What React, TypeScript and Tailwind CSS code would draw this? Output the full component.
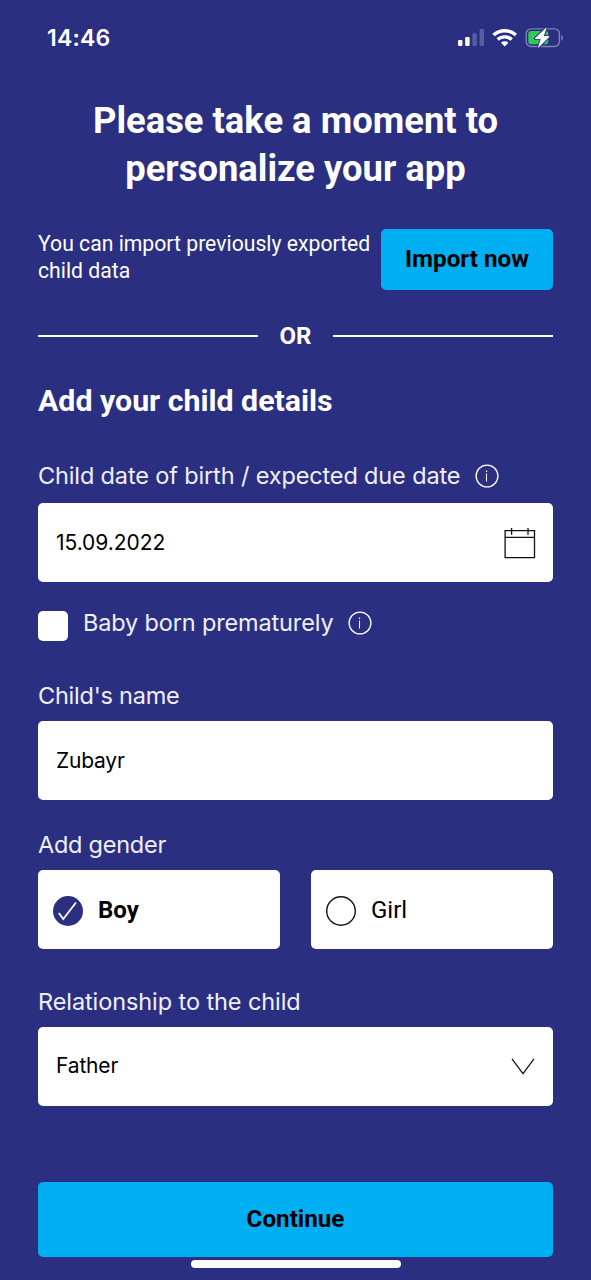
import { useState } from "react";
import type { ReactNode } from "react";

function StatusIcons() {
  return (
    <svg width="110" height="24" viewBox="0 0 110 24" fill="none" aria-hidden="true">
      <g fill="#fff">
        <rect x="3" y="14" width="4.400" height="6" rx="1.200" />
        <rect x="10.200" y="11" width="4.400" height="9" rx="1.200" />
        <rect x="17.400" y="7.200" width="4.400" height="12.800" rx="1.200" opacity="0.220" />
        <rect x="24.600" y="3" width="4.400" height="17" rx="1.200" opacity="0.220" />
      </g>
      <g stroke="#fff" strokeWidth="3.400">
        <path d="M38.500 9.100a16.400 16.400 0 0 1 22.400 0" />
        <path d="M42.700 13.600a10.300 10.300 0 0 1 14 0" />
      </g>
      <path d="M49.700 20.500l-3.700-3.700a5.400 5.400 0 0 1 7.400 0z" fill="#fff" />
      <rect x="71.200" y="2.900" width="33.200" height="17.600" rx="5" stroke="#8080b4" strokeWidth="1.400" />
      <path d="M106.400 8.900c2.200 1 2.200 4.800 0 5.800z" fill="#8080b4" />
      <rect x="73.300" y="5.100" width="20" height="13.200" rx="2.800" fill="#34c759" />
      <path
        d="M91.200 2L80 12.700h6.200l-2.800 8.600L94.200 10.600h-6z"
        fill="#fff"
        stroke="#2b2f82"
        strokeWidth="2.600"
        strokeLinejoin="round"
        paintOrder="stroke"
      />
      <path d="M91.200 2L80 12.700h6.200l-2.800 8.600L94.200 10.600h-6z" fill="#fff" stroke="#fff" strokeWidth="0.600" strokeLinejoin="round" />
    </svg>
  );
}

function InfoIcon() {
  return (
    <svg width="24" height="24" viewBox="0 0 24 24" fill="none" stroke="#fff" aria-hidden="true">
      <circle cx="12" cy="12" r="10.900" strokeWidth="1.300" />
      <path d="M11.500 9.500v8" strokeWidth="1" />
      <path d="M11.500 6.500v1.500" strokeWidth="1.200" />
    </svg>
  );
}

function CalendarIcon() {
  return (
    <svg width="32" height="32" viewBox="0 0 32 32" fill="none" stroke="#111" strokeWidth="1.300" aria-hidden="true">
      <path d="M1.100 3.700h29.400v26.900H1.100zM1.100 10.400h29.400M7.600 1v6.700M24 1v6.700" />
    </svg>
  );
}

function Label({ children, className }: { children: ReactNode; className: string }) {
  return (
    <div
      className={`flex h-[30px] items-center whitespace-nowrap font-['Inter',sans-serif] text-[23.500px] font-normal text-[#f0f0fb] ${className}`}
    >
      {children}
    </div>
  );
}

export default function App() {
  const [gender, setGender] = useState("Boy");
  return (
    <main className="flex h-[1280px] w-[591px] flex-col overflow-hidden bg-[#2b2f82] font-['Roboto',sans-serif] text-white">
      <header className="flex h-[76px] shrink-0 items-center justify-between pl-[47px] pr-[26px]">
        <span className="font-['Inter',sans-serif] text-[23px] font-semibold tracking-[0.200px]">14:46</span>
        <StatusIcons />
      </header>

      <div className="flex flex-col px-[38px]">
        <h1 className="mt-[21px] whitespace-nowrap text-center text-[36.400px] font-bold leading-[48px]">
          Please take a moment to
          <br />
          personalize your app
        </h1>

        <section className="mt-9 flex h-[61px] justify-between">
          <p className="whitespace-nowrap pt-px text-[21.200px] leading-[27px]">
            You can import previously exported
            <br />
            child data
          </p>
          <button className="h-[61px] w-[172px] rounded-[5px] bg-[#00aef2] pb-px text-[24.200px] font-bold text-black">
            Import now
          </button>
        </section>

        <div className="mt-[31px] flex h-[30px] items-center justify-between">
          <span className="h-[1.500px] w-[220px] bg-white" />
          <span className="text-[24px] font-bold">OR</span>
          <span className="h-[1.500px] w-[220px] bg-white" />
        </div>

        <h2 className="mt-[30px] text-[30.300px] font-bold leading-[40px]">Add your child details</h2>

        <div className="mt-[40px] flex items-center justify-between pr-[54px]">
          <Label className="tracking-[-0.140px]">Child date of birth / expected due date</Label>
          <InfoIcon />
        </div>
        <div className="mt-[12px] flex h-[79px] items-center justify-between rounded-[5px] bg-white pl-[18px] pr-[17px] text-black">
          <span className="font-['Inter',sans-serif] text-[21px] tracking-[-0.050px]">15.09.2022</span>
          <CalendarIcon />
        </div>

        <div className="mt-[26px] flex h-[34px] items-start">
          <span className="mt-[3px] h-[30px] w-[30px] rounded-[5px] bg-white" />
          <div className="ml-[15px] flex w-[289px] items-center justify-between">
            <Label className="tracking-[-0.150px]">Baby born prematurely</Label>
            <InfoIcon />
          </div>
        </div>

        <div className="mt-[39px]">
          <Label className="tracking-[-0.230px]">Child's name</Label>
        </div>
        <div className="mt-[10px] flex h-[79px] items-center rounded-[5px] bg-white pl-[18px] text-black">
          <span className="font-['Inter',sans-serif] text-[21px] tracking-[-0.200px]">Zubayr</span>
        </div>

        <div className="mt-[30px]">
          <Label className="tracking-[-0.250px]">Add gender</Label>
        </div>
        <div className="mt-[10px] grid grid-cols-2 gap-[31px]">
          {["Boy", "Girl"].map((name) => (
            <button
              key={name}
              onClick={() => setGender(name)}
              className="flex h-[79px] items-center gap-[15px] rounded-[5px] bg-white pl-[15px] text-[24px] text-black"
            >
              <svg className="mt-[3px]" width="30" height="30" viewBox="0 0 30 30" fill="none" aria-hidden="true">
                {gender === name ? (
                  <>
                    <circle cx="15" cy="15" r="15" fill="#2b2f82" />
                    <path d="M5.800 17l4.500 6L23 6.500" stroke="#fff" strokeWidth="1.800" />
                  </>
                ) : (
                  <circle cx="15" cy="15" r="14.300" stroke="#111" strokeWidth="1.400" />
                )}
              </svg>
              <span className={gender === name ? "font-bold" : "font-normal"}>{name}</span>
            </button>
          ))}
        </div>

        <div className="mt-[38px]">
          <Label className="tracking-[-0.090px]">Relationship to the child</Label>
        </div>
        <div className="mt-[10px] flex h-[79px] items-center justify-between rounded-[5px] bg-white pl-[18px] pr-[18px] text-black">
          <span className="pb-px font-['Inter',sans-serif] text-[21px] tracking-[-0.150px]">Father</span>
          <svg width="24" height="17" viewBox="0 0 24 17" fill="none" aria-hidden="true">
            <path d="M1 .900l11 14.800L23 .900" stroke="#111" strokeWidth="1.200" />
          </svg>
        </div>

        <button className="mt-[76px] h-[75px] rounded-[5px] bg-[#00aef2] pb-px text-[24.200px] font-bold text-black">
          Continue
        </button>
      </div>
      <div className="mt-[3px] h-2 w-[210px] shrink-0 self-center rounded-full bg-white" />
    </main>
  );
}
